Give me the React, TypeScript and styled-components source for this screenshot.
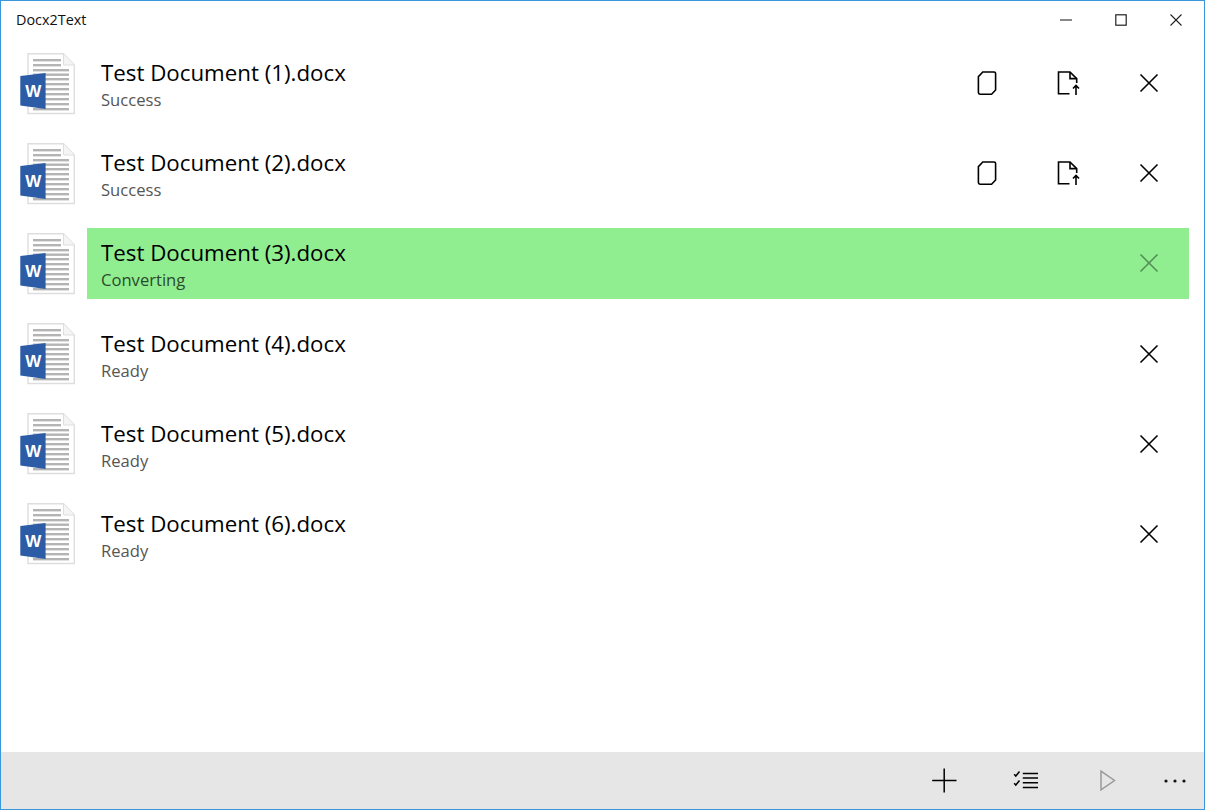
import styled, { createGlobalStyle } from "styled-components";
import { ReactNode } from "react";

const GlobalStyle = createGlobalStyle`
  html, body {
    margin: 0;
    padding: 0;
    background: #fff;
    font-family: "Open Sans", "Noto Sans", sans-serif;
  }
  * { box-sizing: border-box; }
`;

const Window = styled.div`
  width: 1205px;
  height: 810px;
  border: 1px solid #3a96dd;
  display: flex;
  flex-direction: column;
  overflow: hidden;
  background: #fff;
`;

const TitleBar = styled.header`
  height: 37px;
  flex: none;
  display: flex;
  align-items: center;
  justify-content: space-between;
`;

const AppTitle = styled.div`
  margin-left: 15px;
  font-size: 14.4px;
  color: #111;
`;

const WindowControls = styled.div`
  display: flex;
  margin-right: 1px;
`;

const WindowControl = styled.button`
  width: 55px;
  height: 37px;
  padding: 0;
  border: none;
  background: transparent;
  display: flex;
  align-items: center;
  justify-content: center;
`;

const List = styled.main`
  flex: 1;
  display: flex;
  flex-direction: column;
  gap: 19.2px;
  padding: 10px 15px 0 19px;
`;

const Row = styled.div`
  height: 71px;
  display: flex;
  align-items: center;
  gap: 11px;
`;

const FileIcon = styled.svg`
  flex: none;
  width: 56px;
  height: 62px;
`;

const Content = styled.div<{ $active?: boolean }>`
  flex: 1;
  height: 71px;
  display: flex;
  align-items: center;
  justify-content: space-between;
  padding-left: 14px;
  background: ${(p) => (p.$active ? "#90ee90" : "transparent")};
`;

const Labels = styled.div`
  display: flex;
  flex-direction: column;
  padding-top: 3px;
`;

const FileName = styled.div`
  font-size: 22.3px;
  line-height: 28px;
  color: #000;
`;

const Status = styled.div<{ $active?: boolean }>`
  font-size: 16.6px;
  line-height: 23px;
  margin-top: 1px;
  color: ${(p) => (p.$active ? "#2c4a2c" : "#555")};
`;

const Actions = styled.div`
  display: flex;
`;

const ActionButton = styled.button<{ $dim?: boolean }>`
  width: 81px;
  height: 71px;
  padding: 0 0 1px;
  border: none;
  background: transparent;
  display: flex;
  align-items: center;
  justify-content: center;
  opacity: ${(p) => (p.$dim ? 0.4 : 1)};
`;

const CommandBar = styled.footer`
  height: 57px;
  flex: none;
  background: #e6e6e6;
  display: flex;
  align-items: center;
  justify-content: flex-end;
`;

const CommandButton = styled.button`
  width: 81px;
  height: 57px;
  padding: 0;
  border: none;
  background: transparent;
  display: flex;
  align-items: center;
  justify-content: center;
`;

const MoreButton = styled(CommandButton)`
  width: 58px;
`;

function Glyph(props: { size: number; color?: string; width?: number; children: ReactNode }) {
  const { size, color = "#000", width = 1.6, children } = props;
  return (
    <svg
      width={size}
      height={size}
      viewBox={`0 0 ${size} ${size}`}
      fill="none"
      stroke={color}
      strokeWidth={width}
    >
      {children}
    </svg>
  );
}

function WordIcon() {
  const shortLines = [6, 11];
  const longLines = [16, 20.5, 25, 30, 35, 40, 45, 50, 55];
  return (
    <FileIcon viewBox="0 0 56 62">
      <path d="M8 0.7H43.5L54.3 12V60.5H8Z" fill="#fff" stroke="#dedede" strokeWidth="1.4" />
      <path d="M43.5 0.7V12H54.3" fill="#f4f4f4" stroke="#dedede" strokeWidth="1" />
      {shortLines.map((y) => (
        <rect key={y} x="13" y={y} width="28" height="2.4" fill="#b4b4b4" />
      ))}
      {longLines.map((y) => (
        <rect key={y} x="13" y={y} width="36" height="2.4" fill="#b4b4b4" />
      ))}
      <path d="M0.3 23L25.6 20V56L0.3 52.5Z" fill="#2b5ca5" />
      <text x="13.3" y="44" textAnchor="middle" fontSize="17" fontWeight="700" fill="#fff" fontFamily="Liberation Sans">
        W
      </text>
    </FileIcon>
  );
}

function CopyIcon() {
  return (
    <Glyph size={24}>
      <path d="M7.8 1H19A1.6 1.6 0 0 1 20.6 2.6V19L16.6 23.2H5A1.6 1.6 0 0 1 3.4 21.6V5.6Z" />
    </Glyph>
  );
}

function SaveIcon() {
  return (
    <Glyph size={24}>
      <path d="M13.5 22.8H2.5V1H14L20.7 7.6V12" />
      <path d="M14 1V7.6H20.7" />
      <path d="M20 24V14.5M17 17.5L20 14.5L23 17.5" />
    </Glyph>
  );
}

function CloseIcon() {
  return (
    <Glyph size={20}>
      <path d="M1.5 1.5L18.5 18.5M18.5 1.5L1.5 18.5" />
    </Glyph>
  );
}

const documents = [
  { name: "Test Document (1).docx", status: "Success" },
  { name: "Test Document (2).docx", status: "Success" },
  { name: "Test Document (3).docx", status: "Converting" },
  { name: "Test Document (4).docx", status: "Ready" },
  { name: "Test Document (5).docx", status: "Ready" },
  { name: "Test Document (6).docx", status: "Ready" },
];

export default function App() {
  return (
    <>
      <GlobalStyle />
      <Window>
        <TitleBar>
          <AppTitle>Docx2Text</AppTitle>
          <WindowControls>
            <WindowControl>
              <Glyph size={12} color="#555" width={1.4}>
                <path d="M0 6H12" />
              </Glyph>
            </WindowControl>
            <WindowControl>
              <Glyph size={12} color="#222" width={1.2}>
                <rect x="0.8" y="0.8" width="10.4" height="10.4" />
              </Glyph>
            </WindowControl>
            <WindowControl>
              <Glyph size={12} color="#222" width={1.1}>
                <path d="M0.5 0.5L11.5 11.5M11.5 0.5L0.5 11.5" />
              </Glyph>
            </WindowControl>
          </WindowControls>
        </TitleBar>
        <List>
          {documents.map((doc) => {
            const active = doc.status === "Converting";
            const done = doc.status === "Success";
            return (
              <Row key={doc.name}>
                <WordIcon />
                <Content $active={active}>
                  <Labels>
                    <FileName>{doc.name}</FileName>
                    <Status $active={active}>{doc.status}</Status>
                  </Labels>
                  <Actions>
                    {done && (
                      <ActionButton>
                        <CopyIcon />
                      </ActionButton>
                    )}
                    {done && (
                      <ActionButton>
                        <SaveIcon />
                      </ActionButton>
                    )}
                    <ActionButton $dim={active}>
                      <CloseIcon />
                    </ActionButton>
                  </Actions>
                </Content>
              </Row>
            );
          })}
        </List>
        <CommandBar>
          <CommandButton>
            <Glyph size={26} width={1.5}>
              <path d="M13.2 0.5V24.5M1.2 12.5H25.5" />
            </Glyph>
          </CommandButton>
          <CommandButton>
            <Glyph size={26} width={1.5}>
              <path d="M2.2 6.3L3.8 8L7.5 3.6M2.2 15.3L3.8 17L7.5 12.6" />
              <path d="M10.8 5.5H26M10.8 10H26M10.8 14.7H26M10.8 19.5H26" />
            </Glyph>
          </CommandButton>
          <CommandButton>
            <Glyph size={26} color="#9a9a9a" width={1.5}>
              <path d="M8 3.2L21.5 12.5L8 21.8Z" />
            </Glyph>
          </CommandButton>
          <MoreButton>
            <svg width="24" height="4" viewBox="0 0 24 4" fill="#111">
              <circle cx="3" cy="2" r="1.6" />
              <circle cx="12" cy="2" r="1.6" />
              <circle cx="21" cy="2" r="1.6" />
            </svg>
          </MoreButton>
        </CommandBar>
      </Window>
    </>
  );
}
